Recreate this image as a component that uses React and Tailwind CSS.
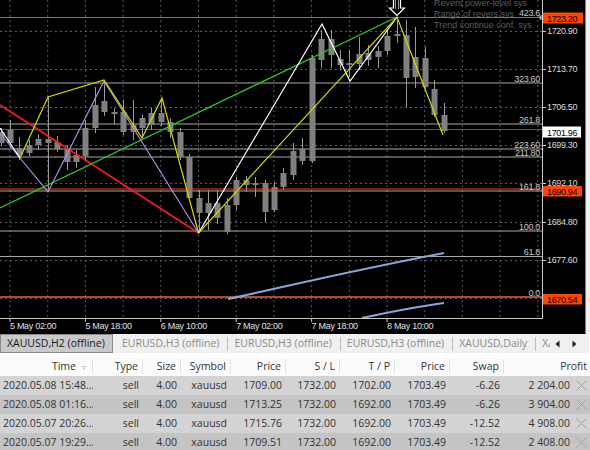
import React from "react";

const candles = [
  [132, 143, 128, 146], [130, 143, 120, 148], [148, 155, 137, 160], [145, 153, 140, 156],
  [139, 145, 134, 150], [139, 143, 97, 192], [142, 149, 136, 152], [149, 162, 145, 170],
  [155, 162, 150, 168], [128, 156, 120, 160], [105, 128, 87, 133], [101, 112, 81, 116],
  [112, 114, 108, 124], [112, 132, 100, 135], [125, 132, 100, 140], [118, 128, 115, 138],
  [113, 125, 108, 130], [113, 122, 98, 126], [122, 132, 118, 138], [132, 157, 128, 160],
  [157, 198, 154, 200], [198, 213, 190, 233], [203, 213, 190, 230], [203, 218, 190, 224],
  [205, 232, 198, 234], [180, 205, 177, 210], [180, 185, 176, 192], [183, 185, 177, 197],
  [183, 212, 180, 222], [187, 210, 182, 212], [173, 187, 168, 190], [151, 175, 143, 180],
  [149, 161, 138, 165], [58, 161, 55, 163], [39, 60, 30, 68], [39, 55, 30, 68],
  [59, 65, 50, 70], [63, 65, 50, 77], [54, 64, 37, 70], [53, 60, 45, 66],
  [51, 57, 46, 68], [36, 51, 30, 55], [34, 36, 18, 43], [35, 78, 20, 107],
  [57, 77, 27, 88], [58, 87, 47, 90], [89, 115, 80, 117], [115, 131, 103, 133],
];

const fibs = [
  [17.5, "423.6"], [83, "323.60"], [124, "261.8"], [149, "223.60"], [157, "211.80"],
  [191, "161.8"], [231, "100.0"], [256.5, "61.8"], [297, "0.0"],
];

const axis = [
  [31, "1720.90"], [69, "1713.70"], [107, "1706.50"], [145, "1699.30"],
  [183, "1692.10"], [222, "1684.80"], [260, "1677.60"],
];

const times = [
  [10, "5 May 02:00"], [85.4, "5 May 18:00"], [160.8, "6 May 10:00"],
  [236.2, "7 May 02:00"], [311.6, "7 May 18:00"], [387, "8 May 10:00"],
];

const ORANGE = "#ff4500";

function Chart() {
  const gridX = [];
  for (let k = 0; k < 15; k++) {
    const x = 10 + 37.7 * k;
    if (x < 540) gridX.push(x);
  }
  const gridY = [31, 69, 107, 145, 183, 222, 260, 298];
  return (
    <svg width="585" height="334" viewBox="0 0 585 334" className="block font-['Liberation_Sans',Arial,sans-serif]">
      <rect x="0" y="0" width="585" height="334" fill="#000" />
      {gridX.map((x, i) => (
        <line key={"gx" + i} x1={x} y1="0" x2={x} y2="318" stroke="#5c5c5c" strokeWidth="1" strokeDasharray="2 3" />
      ))}
      {gridY.map((y, i) => (
        <line key={"gy" + i} x1="0" y1={y + 0.5} x2="542" y2={y + 0.5} stroke="#5c5c5c" strokeWidth="1" strokeDasharray="2 3" />
      ))}
      {/* fib levels */}
      {fibs.map(([y, t], i) => (
        <line key={"f" + i} x1="0" y1={y} x2="542" y2={y} stroke="#a8a8a8" strokeWidth="1" />
      ))}
      <line x1="0" y1="129.5" x2="542" y2="129.5" stroke="#5a5a5a" strokeWidth="1" />
      {/* candles */}
      {candles.map(([t, b, wt, wb], i) => {
        const cx = Math.round(0.55 + 9.43 * i) + 0.5;
        return (
          <g key={"c" + i}>
            <line x1={cx} y1={wt} x2={cx} y2={wb} stroke="#9a9a9a" strokeWidth="1" />
            <rect x={cx - 3} y={t} width="6" height={Math.max(1, b - t)} fill="#808080" />
          </g>
        );
      })}
      {/* orange levels */}
      <line x1="0" y1="17.5" x2="542" y2="17.5" stroke={ORANGE} strokeWidth="1.2" />
      <line x1="0" y1="189" x2="542" y2="189" stroke={ORANGE} strokeWidth="1.2" />
      <line x1="0" y1="297" x2="542" y2="297" stroke={ORANGE} strokeWidth="1.2" />
      {/* indicator lines */}
      <path d="M228,299 C280,288 340,273 444,253" stroke="#8aa6d8" strokeWidth="2" fill="none" />
      <path d="M362,318 C390,312 415,307 444,303" stroke="#8aa6d8" strokeWidth="2" fill="none" />
      {/* trend lines */}
      <line x1="0" y1="105" x2="198.5" y2="233" stroke="#ff1a1a" strokeWidth="1.5" />
      <line x1="0" y1="208" x2="397" y2="17" stroke="#2fc42f" strokeWidth="1.3" />
      <polyline points="0,133 20,158 48,192 104,81 198.5,233" stroke="#a98ee3" strokeWidth="1.2" fill="none" />
      <polyline points="0,128 20,158" stroke="#ffffff" strokeWidth="1.2" fill="none" />
      <polyline points="198.5,233 322,24 350,81 397,17" stroke="#ffffff" strokeWidth="1.2" fill="none" />
      <polyline points="20,158 48,97 104,80 142,138 162,98 198.5,233 397,17 443,135" stroke="#d8d800" strokeWidth="1.2" fill="none" />
      {/* arrow */}
      <path d="M393.5,-1 V8 H389.5 L397,15.5 L404.5,8 H400.5 V-1" stroke="#ffffff" strokeWidth="1.2" fill="#000" />
      <line x1="395.5" y1="0" x2="395.5" y2="9" stroke="#ffffff" strokeWidth="0.6" />
      <line x1="398.5" y1="0" x2="398.5" y2="9" stroke="#ffffff" strokeWidth="0.6" />
      {/* indicator labels */}
      <text x="434" y="6" fontSize="9" fill="#5e5e5e">Revers power-level sys</text>
      <text x="434" y="17" fontSize="9" fill="#5e5e5e">Range of revers sys</text>
      <text x="434" y="28" fontSize="9" fill="#5e5e5e">Trend continue conf. sys</text>
      {/* fib labels */}
      {fibs.map(([y, t], i) => (
        <text key={"fl" + i} x="540" y={y - 1.5} fontSize="9" fill="#c8c8c8" textAnchor="end" letterSpacing="-0.3">
          {t}
        </text>
      ))}
      {/* plot border */}
      <line x1="542.5" y1="0" x2="542.5" y2="318.5" stroke="#c8c8c8" strokeWidth="1" />
      <line x1="0" y1="318.5" x2="542.5" y2="318.5" stroke="#c8c8c8" strokeWidth="1" />
      <rect x="540" y="16" width="3" height="3" fill="none" stroke="#ffffff" strokeWidth="0.8" />
      {/* axis ticks & labels */}
      {axis.map(([y, t], i) => (
        <g key={"a" + i}>
          <line x1="542" y1={y + 0.5} x2="546" y2={y + 0.5} stroke="#c8c8c8" strokeWidth="1" />
          <text x="547" y={y + 3} fontSize="9" fill="#dcdcdc" letterSpacing="-0.35">{t}</text>
        </g>
      ))}
      {/* price boxes */}
      <rect x="543" y="12.5" width="40" height="11" fill={ORANGE} />
      <text x="547" y="21.5" fontSize="9" fill="#000" letterSpacing="-0.35">1723.20</text>
      <rect x="543" y="126.5" width="38" height="11" fill="#ffffff" />
      <text x="547" y="135.5" fontSize="9" fill="#000" letterSpacing="-0.35">1701.96</text>
      <rect x="543" y="186" width="39" height="10.5" fill={ORANGE} />
      <text x="547" y="194.5" fontSize="9" fill="#000" letterSpacing="-0.35">1690.94</text>
      <rect x="543" y="294" width="39" height="10.5" fill={ORANGE} />
      <text x="547" y="302.5" fontSize="9" fill="#000" letterSpacing="-0.35">1670.54</text>
      {/* time axis */}
      {times.map(([x, t], i) => (
        <g key={"t" + i}>
          <line x1={x} y1="318" x2={x} y2="322" stroke="#c8c8c8" strokeWidth="1" />
          <text x={x} y="329" fontSize="9" fill="#e0e0e0" letterSpacing="-0.3">{t}</text>
        </g>
      ))}
    </svg>
  );
}

function Sep() {
  return <div className="w-px h-[14px] bg-[#c2c2c2] self-center shrink-0" />;
}

function TabBar() {
  const tabs = ["EURUSD,H3 (offline)", "EURUSD,H3 (offline)", "EURUSD,H3 (offline)", "XAUUSD,Daily", "XAUUSD,H1 (offline)"];
  return (
    <div className="h-[19px] shrink-0 flex bg-[#f0f0f0] text-[10.5px] leading-none">
      <div className="flex-1 flex overflow-hidden">
        <div className="w-[113px] shrink-0 flex items-center pl-[6px] bg-[#c9c9c9] border border-[#8a8a8a] text-[#1a1a1a] whitespace-nowrap">
          XAUUSD,H2 (offline)
        </div>
        {tabs.map((t, i) => (
          <React.Fragment key={i}>
            <div className={"flex items-center shrink-0 whitespace-nowrap text-[#8a8a8a] pr-[8px] " + (i === 0 ? "pl-[9px]" : "pl-[6px]")}>
              {t}
            </div>
            {i < tabs.length - 1 && <Sep />}
          </React.Fragment>
        ))}
      </div>
      <div className="w-[40px] shrink-0 flex items-center justify-between pl-[5px] pr-[12px] bg-[#f0f0f0] border-r border-[#ffffff]">
        <svg width="5" height="8" viewBox="0 0 5 8"><path d="M4.5,0.5 L0.5,4 L4.5,7.5 Z" fill="#222" /></svg>
        <svg width="5" height="8" viewBox="0 0 5 8"><path d="M0.5,0.5 L4.5,4 L0.5,7.5 Z" fill="#222" /></svg>
      </div>
    </div>
  );
}

const cols = [
  { h: "Time", w: 93 },
  { h: "Type", w: 50 },
  { h: "Size", w: 38 },
  { h: "Symbol", w: 50 },
  { h: "Price", w: 55 },
  { h: "S / L", w: 54 },
  { h: "T / P", w: 55 },
  { h: "Price", w: 55 },
  { h: "Swap", w: 54 },
];

const rows = [
  ["2020.05.08 15:48...", "sell", "4.00", "xauusd", "1709.00", "1732.00", "1702.00", "1703.49", "-6.26", "2 204.00"],
  ["2020.05.08 01:16...", "sell", "4.00", "xauusd", "1713.25", "1732.00", "1692.00", "1703.49", "-6.26", "3 904.00"],
  ["2020.05.07 20:26...", "sell", "4.00", "xauusd", "1715.76", "1732.00", "1692.00", "1703.49", "-12.52", "4 908.00"],
  ["2020.05.07 19:29...", "sell", "4.00", "xauusd", "1709.51", "1732.00", "1692.00", "1703.49", "-12.52", "2 408.00"],
];

function Table() {
  return (
    <div className="flex flex-col text-[10.5px] leading-none text-[#333]">
      <div className="h-[19px] flex bg-[#fbfbfb] shrink-0">
        {cols.map((c, i) => (
          <div
            key={i}
            style={{ width: c.w }}
            className="shrink-0 flex items-center justify-end pr-[4px] border-r border-[#e2e2e2] my-[2px]"
          >
            {i === 0 ? (
              <>
                <span>{c.h}</span>
                <span className="ml-[6px] mr-[-1px] text-[#b0b0b0] text-[8px]">▿</span>
                <span className="w-[3px]" />
              </>
            ) : (
              c.h
            )}
          </div>
        ))}
        <div className="flex-1 flex items-center justify-end pr-[3px]">Profit</div>
      </div>
      {rows.map((r, ri) => (
        <div key={ri} className={"h-[19px] flex shrink-0 " + (ri % 2 === 0 ? "bg-[#d3d3d3]" : "bg-[#c4c4c4]")}>
          {cols.map((c, i) => (
            <div
              key={i}
              style={{ width: c.w }}
              className={"shrink-0 flex items-center whitespace-nowrap overflow-hidden " + (i === 0 ? "justify-start pl-[3px]" : "justify-end pr-[4px]")}
            >
              {r[i]}
            </div>
          ))}
          <div className="flex-1 flex items-center justify-end pr-[3px]">
            <span>{r[9]}</span>
            <svg width="11" height="11" viewBox="0 0 11 11" className="ml-[6px]">
              <path d="M0.5,0.5 L10.5,10.5 M10.5,0.5 L0.5,10.5" stroke="#a0a0a0" strokeWidth="1" />
            </svg>
          </div>
        </div>
      ))}
    </div>
  );
}

export default function App() {
  return (
    <div className="w-[590px] h-[450px] overflow-hidden bg-[#f0f0f0] flex flex-col font-['Open_Sans',sans-serif]">
      <div className="flex h-[334px] shrink-0">
        <div className="w-[585px] h-full bg-black">
          <Chart />
        </div>
        <div className="flex-1 bg-[#f0f0f0] border-l border-[#7a7a7a]" />
      </div>
      <TabBar />
      <div className="h-[4px] bg-white shrink-0" />
      <Table />
    </div>
  );
}
